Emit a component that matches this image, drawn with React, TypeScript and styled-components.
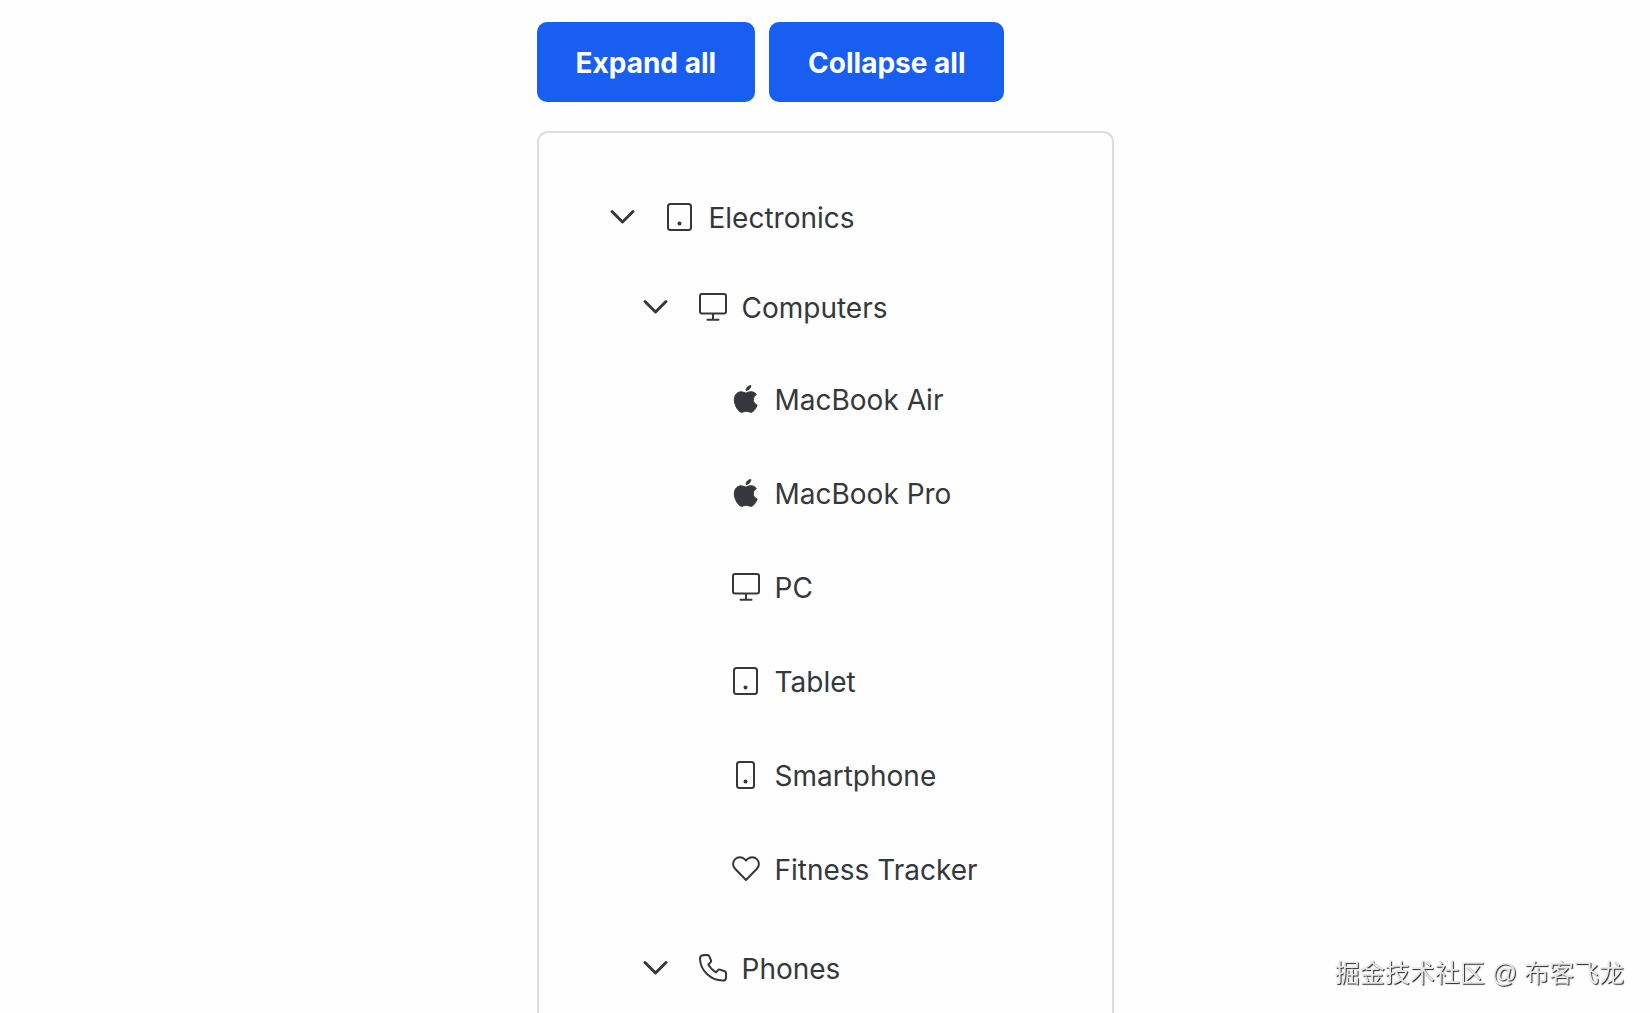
import React, { useState } from 'react';
import styled, { createGlobalStyle } from 'styled-components';

type IconName = 'tablet' | 'desktop' | 'apple' | 'mobile' | 'heart' | 'phone';

interface TreeNode {
  key: string;
  label: string;
  icon: IconName;
  children?: TreeNode[];
}

interface RowProps {
  $leaf: boolean;
}

interface ListProps {
  $nested?: boolean;
}

interface ChevronProps {
  $open: boolean;
}

const GlobalStyle = createGlobalStyle`
  * {
    box-sizing: border-box;
  }

  body {
    margin: 0;
    background: #fefefe;
    color: #34383c;
    font-family: Inter, 'Liberation Sans', sans-serif;
    font-size: 28px;
  }
`;

const Page = styled.main`
  display: flex;
  flex-direction: column;
  width: 100%;
  max-width: 577px;
  min-height: 100vh;
  margin: 0 auto;
  padding-top: 22px;
`;

const Toolbar = styled.div`
  display: flex;
  gap: 14px;
  margin-bottom: 29px;
`;

const Button = styled.button`
  padding: 24px 39px 22px;
  border: none;
  border-radius: 10px;
  background: #175ef1;
  color: #ffffff;
  font-family: inherit;
  font-size: 28px;
  font-weight: 700;
  line-height: 34px;
  white-space: nowrap;
  cursor: pointer;
`;

const Panel = styled.section`
  flex: 1;
  padding: 41px 38px 0;
  border: 2px solid #dcdddf;
  border-bottom: none;
  border-radius: 11px 11px 0 0;
`;

const List = styled.ul<ListProps>`
  display: flex;
  flex-direction: column;
  gap: 4px;
  margin: 0;
  padding: ${({ $nested }) => ($nested ? '4px 0 0 33px' : '0')};
  list-style: none;

  /* extra room between an open branch and the next one */
  li:not(:last-child) > & {
    padding-bottom: 7px;
  }
`;

const Row = styled.div<RowProps>`
  display: flex;
  align-items: center;
  height: ${({ $leaf }) => ($leaf ? '90px' : '86px')};
  padding-left: ${({ $leaf }) => ($leaf ? '89px' : '14px')};
`;

const Toggler = styled.button`
  display: flex;
  align-items: center;
  justify-content: center;
  width: 64px;
  height: 64px;
  margin-right: 11px;
  padding: 0;
  border: none;
  border-radius: 50%;
  background: transparent;
  color: inherit;
  cursor: pointer;
`;

const Icon = styled.svg`
  flex: none;
  width: 28px;
  height: 28px;
  fill: none;
  stroke: currentColor;
  stroke-width: 2;
  stroke-linecap: round;
  stroke-linejoin: round;
`;

const Chevron = styled(Icon)<ChevronProps>`
  stroke-width: 3;
  transform: ${({ $open }) => ($open ? 'none' : 'rotate(-90deg)')};
`;

const Label = styled.span`
  margin-left: 15px;
  padding-top: 2px;
  line-height: 36px;
  white-space: nowrap;
`;

const Credit = styled.footer`
  position: fixed;
  right: 26px;
  bottom: 22px;
  color: #e9e9e9;
  font-family: 'Liberation Sans', 'Noto Sans CJK SC', sans-serif;
  font-size: 25px;
  line-height: 36px;
  text-shadow: 1px 1px 1px #222222;
  white-space: nowrap;
`;

const icons: Record<IconName, React.ReactNode> = {
  tablet: (
    <>
      <rect x="2" y="1" width="23" height="26" rx="2.5" />
      <circle cx="13.5" cy="20.5" r="2" fill="currentColor" stroke="none" />
    </>
  ),
  desktop: (
    <>
      <rect x="1" y="1" width="26" height="19.5" rx="2" />
      <path d="M14 21v5.5M8.5 26.8h11" />
    </>
  ),
  apple: (
    <path
      fill="currentColor"
      strokeWidth="1"
      transform="translate(-1 0)"
      d="M22.3 14.8c0-2.3 1-4 3.1-5.3-1.2-1.7-2.9-2.6-5.2-2.8-2.2-.2-4.6 1.3-5.4 1.3-.9 0-3-1.2-4.6-1.2C6.9 6.8 3.3 9.4 3.3 14.8c0 1.6.3 3.2.9 4.9.8 2.2 3.6 7.7 6.5 7.6 1.5 0 2.6-1.1 4.6-1.1 1.900 0 2.900 1.100 4.600 1.100 3 0 5.500-5 6.200-7.300-3.900-1.800-3.800-5.100-3.800-5.200zM18.400 3.900c1.600-1.900 1.500-3 1.400-3.400-1.400.1-2.700.8-3.500 1.700-.9 1-1.300 2-1.200 3.100 1.300.1 2.300-.3 3.300-1.400z"
    />
  ),
  mobile: (
    <>
      <rect x="5" y="1" width="17" height="26" rx="2.5" />
      <circle cx="13.5" cy="20.5" r="2" fill="currentColor" stroke="none" />
    </>
  ),
  heart: (
    <path d="M14 25 3.1 13.8a6.9 6.9 0 0 1 0-9.7 6.7 6.7 0 0 1 9.5 0L14 5.5l1.4-1.4a6.7 6.7 0 0 1 9.5 0 6.9 6.9 0 0 1 0 9.700L14 25z" />
  ),
  phone: (
    <path d="M3 1.500C5 .8 7.500.8 9.300 1.200c.6.2.8.6 1 1.100L12 6.400c.3.8.1 1.400-.5 2L9.300 10.400c1.500 3 4.300 6 7.800 8l1.900-2.300c.5-.6 1.200-.7 2-.5l4.600 1.700c1 .4 1.400.8 1.400 1.600v4.500c0 2-1.200 3.200-3.200 3.200C11.500 26.500 1.500 16.500 1 5 1 3 1.500 2 3 1.500z" />
  ),
};

const nodes: TreeNode[] = [
  {
    key: 'electronics',
    label: 'Electronics',
    icon: 'tablet',
    children: [
      {
        key: 'computers',
        label: 'Computers',
        icon: 'desktop',
        children: [
          { key: 'macbook-air', label: 'MacBook Air', icon: 'apple' },
          { key: 'macbook-pro', label: 'MacBook Pro', icon: 'apple' },
          { key: 'pc', label: 'PC', icon: 'desktop' },
          { key: 'tablet', label: 'Tablet', icon: 'tablet' },
          { key: 'smartphone', label: 'Smartphone', icon: 'mobile' },
          { key: 'fitness-tracker', label: 'Fitness Tracker', icon: 'heart' },
        ],
      },
      { key: 'phones', label: 'Phones', icon: 'phone', children: [] },
    ],
  },
];

const allKeys = ['electronics', 'computers', 'phones'];

const App: React.FC = () => {
  const [expanded, setExpanded] = useState<string[]>(allKeys);

  const toggle = (key: string) => {
    setExpanded((keys) => (keys.includes(key) ? keys.filter((k) => k !== key) : [...keys, key]));
  };

  const renderNode = (node: TreeNode) => {
    const open = expanded.includes(node.key);

    return (
      <li key={node.key}>
        <Row $leaf={!node.children}>
          {node.children && (
            <Toggler
              type="button"
              aria-label={`Toggle ${node.label}`}
              aria-expanded={open}
              onClick={() => toggle(node.key)}
            >
              <Chevron viewBox="0 0 28 28" $open={open}>
                <path d="M3 8.500 13.500 19 24 8.500" />
              </Chevron>
            </Toggler>
          )}
          <Icon viewBox="0 0 28 28" aria-hidden="true">
            {icons[node.icon]}
          </Icon>
          <Label>{node.label}</Label>
        </Row>
        {open && node.children && node.children.length > 0 && (
          <List $nested>{node.children.map(renderNode)}</List>
        )}
      </li>
    );
  };

  return (
    <>
      <GlobalStyle />
      <Page>
        <Toolbar>
          <Button type="button" onClick={() => setExpanded(allKeys)}>
            Expand all
          </Button>
          <Button type="button" onClick={() => setExpanded([])}>
            Collapse all
          </Button>
        </Toolbar>
        <Panel>
          <List>{nodes.map(renderNode)}</List>
        </Panel>
      </Page>
      <Credit>掘金技术社区 @ 布客飞龙</Credit>
    </>
  );
};

export default App;
